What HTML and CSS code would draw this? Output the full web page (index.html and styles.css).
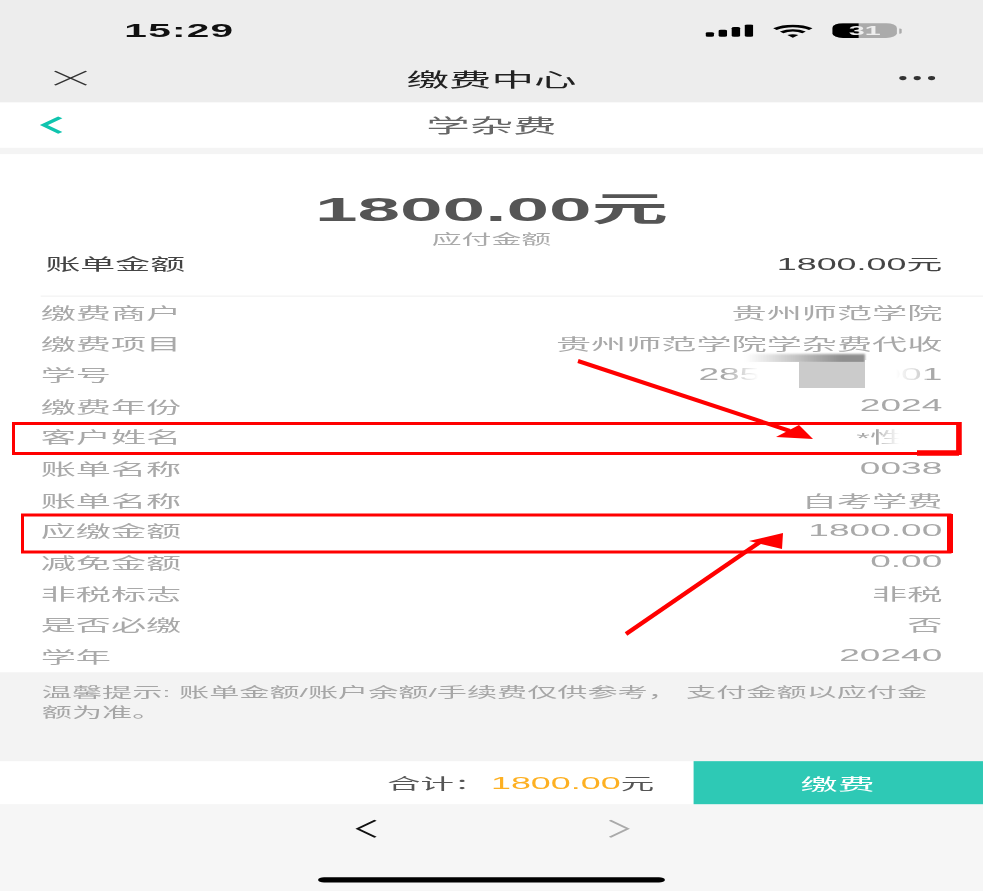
FILE: index.html
```html
<!DOCTYPE html>
<html lang="zh">
<head>
<meta charset="utf-8">
<title>缴费中心</title>
<link rel="stylesheet" href="styles.css">
</head>
<body>
<div class="viewport">
  <div class="phone">
    <header class="chrome">
      <div class="status">
        <span class="time">15:29</span>
        <div class="status-icons">
          <svg class="signal" viewBox="0 0 21 12"><rect x="0" y="7.5" width="3.6" height="4.5" rx="1"/><rect x="5.6" y="5.2" width="3.6" height="6.8" rx="1"/><rect x="11.2" y="2.6" width="3.6" height="9.4" rx="1"/><rect x="16.8" y="0" width="3.6" height="12" rx="1"/></svg>
          <svg class="wifi" viewBox="0 0 17 13"><path d="M1 4.6C5.4.6 11.6.6 16 4.6" fill="none" stroke="#000" stroke-width="2.2"/><path d="M3.8 7.6c2.8-2.4 6.6-2.4 9.4 0" fill="none" stroke="#000" stroke-width="2.2"/><path d="M6.2 10.2c1.4-1.1 3.2-1.1 4.6 0L8.5 12.8z"/></svg>
          <div class="battery"><span class="battery-fill"></span><span class="battery-num">31</span></div>
          <span class="battery-cap"></span>
        </div>
      </div>
      <div class="nav">
        <svg class="close" viewBox="0 0 16 16"><path d="M1 1l14 14M15 1L1 15" fill="none" stroke="#333" stroke-width="1.1"/></svg>
        <span class="nav-title">缴费中心</span>
        <div class="more"><i></i><i></i><i></i></div>
      </div>
    </header>

    <div class="subhead">
      <svg class="back" viewBox="0 0 10 18"><path d="M8.5 2L2 9l6.500 7" fill="none" stroke="#0fc4ae" stroke-width="2.300"/></svg>
      <span class="subhead-title">学杂费</span>
    </div>

    <main class="sheet">
      <div class="hero">
        <div class="amount">1800.00元</div>
        <div class="amount-label">应付金额</div>
      </div>
      <div class="bill-row"><span>账单金额</span><span class="bill-value">1800.00元</span></div>
      <div class="rows">
        <div class="row"><span>缴费商户</span><span>贵州师范学院</span></div>
        <div class="row"><span>缴费项目</span><span>贵州师范学院学杂费代收</span></div>
        <div class="row"><span>学号</span><span class="split num"><span>285</span><span>001</span></span></div>
        <div class="row"><span>缴费年份</span><span class="num">2024</span></div>
        <div class="row"><span>客户姓名</span><span class="name">*性</span></div>
        <div class="row"><span>账单名称</span><span class="num">0038</span></div>
        <div class="row"><span>账单名称</span><span>自考学费</span></div>
        <div class="row"><span>应缴金额</span><span class="num">1800.00</span></div>
        <div class="row"><span>减免金额</span><span class="num">0.00</span></div>
        <div class="row"><span>非税标志</span><span>非税</span></div>
        <div class="row"><span>是否必缴</span><span>否</span></div>
        <div class="row"><span>学年</span><span class="num">20240</span></div>
      </div>
    </main>

    <div class="tip">温馨提示: 账单金额/账户余额/手续费仅供参考， 支付金额以应付金额为准。</div>

    <div class="paybar">
      <div class="total">合计：<em>1800.00</em>元</div>
      <div class="pay">缴费</div>
    </div>

    <footer class="toolbar">
      <div class="arrows">
        <svg class="tool" viewBox="0 0 10 18"><path d="M9 1L1.500 9 9 17" fill="none" stroke="#111" stroke-width="1.300"/></svg>
        <svg class="tool" viewBox="0 0 10 18"><path d="M1 1l7.500 8L1 17" fill="none" stroke="#aaa" stroke-width="1.300"/></svg>
      </div>
      <span class="home"></span>
    </footer>
  </div>

  <div class="patch patch-id-shade"></div>
  <div class="patch patch-id-left"></div>
  <div class="patch patch-id-grey"></div>
  <div class="patch patch-id-right"></div>
  <div class="patch patch-name"></div>

  <svg class="marks" viewBox="0 0 983 891">
    <g fill="none" stroke="#f00">
      <path d="M13.500 423.500H958V453.500H13.500Z" stroke-width="3"/>
      <path d="M959 422V455M917 453H959" stroke-width="5.500"/>
      <path d="M22.500 515H950V552H22.500Z" stroke-width="3"/>
      <path d="M950 514V553" stroke-width="6"/>
      <path d="M578 361L790 431" stroke-width="4"/>
      <path d="M626 634L760 542" stroke-width="4.500"/>
    </g>
    <path d="M799 425L776 437L813 439Z" fill="#f00"/>
    <path d="M749 541L783 533L782 549Z" fill="#f00"/>
  </svg>
</div>
</body>
</html>
```

FILE: styles.css
```css
* { box-sizing: border-box; }
html, body { margin: 0; padding: 0; background: #fff; }
body {
  font-family: "Liberation Sans", "Noto Sans CJK SC", sans-serif;
  overflow: hidden;
}
.viewport { position: relative; width: 983px; height: 891px; overflow: hidden; }

/* The reference is a 411x844 phone capture stretched to 983x891. */
.phone {
  width: 411px;
  height: 844px;
  display: flex;
  flex-direction: column;
  background: #f4f4f4;
  transform: scale(2.3917, 1.0557);
  transform-origin: 0 0;
  filter: blur(0.15px);
}

.chrome { height: 96.6px; background: #ededed; display: flex; flex-direction: column; flex: none; }
.status { height: 52px; padding: 6px 34px 0 52px; display: flex; align-items: center; justify-content: space-between; }
.time { font-size: 17px; font-weight: 700; color: #111; letter-spacing: .5px; position: relative; top: 1px; }
.status-icons { display: flex; align-items: center; }
.signal { width: 20.500px; height: 12px; margin-right: 8px; }
.wifi { width: 17px; height: 13px; margin-right: 8px; }
.battery { position: relative; width: 26.500px; height: 14px; border-radius: 4.500px; background: #ababab; overflow: hidden; display: flex; align-items: center; justify-content: center; }
.battery-fill { position: absolute; left: 0; top: 0; bottom: 0; width: 11px; background: #000; }
.battery-num { position: relative; font-size: 12px; font-weight: 700; color: #eee; }
.battery-cap { width: 1.200px; height: 5px; margin-left: 1px; background: #aaa; border-radius: 0 2px 2px 0; }

.nav { flex: 1; padding: 0 20px 0 22px; display: flex; align-items: center; justify-content: space-between; position: relative; }
.close { width: 15px; height: 16px; }
.nav-title { position: absolute; left: 0; right: 0; text-align: center; font-size: 17.800px; color: #222; }
.more { display: flex; gap: 3px; }
.more i { width: 3px; height: 4px; border-radius: 50%; background: #333; }

.subhead { height: 43.600px; flex: none; background: #fff; display: flex; align-items: center; padding-left: 16px; position: relative; }
.back { width: 11px; height: 19px; }
.subhead-title { position: absolute; left: 0; right: 0; text-align: center; font-size: 18.200px; color: #666; }

.sheet { flex: none; height: 490.300px; margin-top: 6.200px; background: #fff; display: flex; flex-direction: column; }
.hero { height: 90px; padding-top: 33px; text-align: center; }
.amount { font-size: 32px; line-height: 38px; font-weight: 700; color: #555; }
.amount-label { font-size: 12.500px; line-height: 20px; color: #aaa; }
.bill-row { height: 43.400px; margin: 0 17px 0 19px; padding-top: 5px; display: flex; justify-content: space-between; font-size: 14.600px; line-height: 20px; color: #444; }
.bill-value { font-size: 15px; }
.rows { margin: 0 0 0 16.500px; padding-right: 17px; border-top: 1px solid #f0f0f0; }
.row { height: 29.600px; padding-left: .5px; display: flex; align-items: center; justify-content: space-between; font-size: 14.700px; color: #a9a9a9; }
.num { font-size: 15.500px; }
.split { width: 102px; display: flex; justify-content: space-between; }
.name { width: 36px; }

.tip { flex: none; height: 84.300px; padding: 10.500px 18px 0 17.500px; background: #f3f3f3; font-size: 12.600px; line-height: 19px; color: #a6a6a6; }

.paybar { flex: none; height: 41px; background: #fff; display: flex; align-items: center; justify-content: flex-end; }
.total { font-size: 14px; color: #555; margin-right: 16px; }
.total em { font-style: normal; color: #fdb022; font-size: 15px; margin-left: 1.500px; }
.pay { width: 121.500px; height: 100%; background: #2ec9b5; color: #fff; font-size: 15.500px; display: flex; align-items: center; justify-content: center; }

.toolbar { flex: 1; background: #f6f6f6; display: flex; flex-direction: column; align-items: center; }
.arrows { width: 116px; margin-top: 14.500px; display: flex; justify-content: space-between; }
.tool { width: 10px; height: 18px; }
.home { width: 145.500px; height: 5px; margin-top: 36.500px; border-radius: 3px; background: #000; }

.patch { position: absolute; }
.patch-id-shade { left: 745px; top: 354px; width: 120px; height: 9px; background: linear-gradient(90deg, rgba(140,140,140,0), #8f8f8f 80%); filter: blur(1px); }
.patch-id-left { left: 724px; top: 362px; width: 76px; height: 26px; background: linear-gradient(90deg, rgba(255,255,255,0), #fff 45%); }
.patch-id-grey { left: 799px; top: 362px; width: 66px; height: 26px; background: #cbcbcb; }
.patch-id-right { left: 865px; top: 360px; width: 62px; height: 28px; background: linear-gradient(90deg, #fff 50%, rgba(255,255,255,.35)); }
.patch-name { left: 880px; top: 427px; width: 66px; height: 20px; background: linear-gradient(90deg, rgba(255,255,255,.3), #fff 30%, rgba(255,255,255,.85)); }

.marks { position: absolute; left: 0; top: 0; width: 983px; height: 891px; }
```
